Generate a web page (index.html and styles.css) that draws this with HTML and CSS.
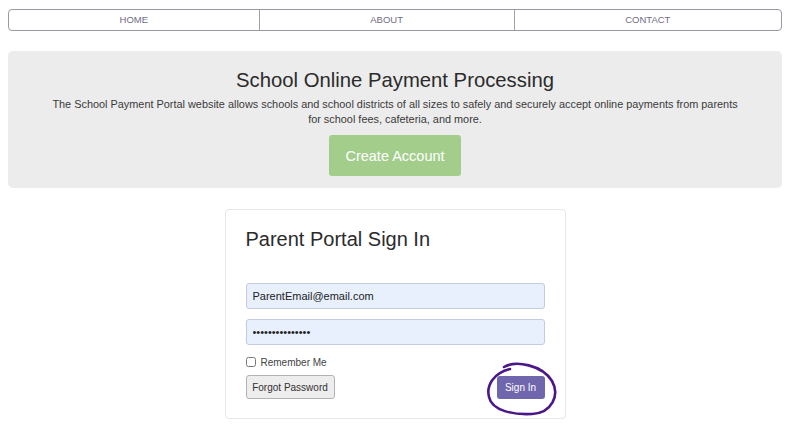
FILE: index.html
```html
<!DOCTYPE html>
<html lang="en">
<head>
    <meta charset="UTF-8">
    <meta name="viewport" content="width=device-width, initial-scale=1.0">
    <title>School Payment Portal</title>
    <link rel="stylesheet" href="styles.css">
</head>
<body>
    <nav class="top-nav">
        <a href="#" class="nav-item">HOME</a>
        <a href="#" class="nav-item">ABOUT</a>
        <a href="#" class="nav-item">CONTACT</a>
    </nav>

    <div class="jumbotron">
        <h1>School Online Payment Processing</h1>
        <p>The School Payment Portal website allows schools and school districts of all sizes to safely and securely accept online payments from parents for school fees, cafeteria, and more.</p>
        <button class="create-btn">Create Account</button>
    </div>

    <div class="signin-card">
        <h2>Parent Portal Sign In</h2>
        <form class="signin-form">
            <input type="email" class="field" value="ParentEmail@email.com">
            <input type="password" class="field" value="passwordpassw12">
            <label class="remember"><input type="checkbox"> Remember Me</label>
            <div class="form-actions">
                <button type="button" class="forgot-btn">Forgot Password</button>
                <div class="signin-wrap">
                    <button type="submit" class="signin-btn">Sign In</button>
                    <svg class="scribble" width="72" height="56" viewBox="0 0 72 56">
                        <path d="M18 6 C30 -1 56 4 66 20 C74 34 66 52 46 53 C28 54 6 50 3 36 C0 24 8 12 24 8"
                              fill="none" stroke="#4b1688" stroke-width="2.6" stroke-linecap="round"/>
                    </svg>
                </div>
            </div>
        </form>
    </div>
</body>
</html>
```

FILE: styles.css
```css
body {
    font-family: 'Liberation Sans', Arial, sans-serif;
    background-color: #fff;
    color: #333;
    margin: 0;
    padding: 9px 18px 0 8px;
}

.top-nav {
    display: flex;
    border: 1px solid #9a9aa4;
    border-radius: 4px;
    height: 20px;
}

.nav-item {
    flex: 1 1 auto;
    text-align: center;
    font-size: 9.5px;
    line-height: 20px;
    color: #6f6c86;
    text-decoration: none;
}

.nav-item + .nav-item {
    border-left: 1px solid #a0a0a8;
}

.jumbotron {
    margin-top: 20px;
    background-color: #ececec;
    border-radius: 5px;
    padding: 18px 40px 12px;
    text-align: center;
}

h1 {
    font-size: 20.3px;
    line-height: 23px;
    font-weight: normal;
    color: #2b2b2b;
    margin: 0 0 5px;
}

.jumbotron p {
    font-size: 10.9px;
    line-height: 15px;
    color: #3a3a3a;
    margin: 0 0 8px;
}

.create-btn {
    display: block;
    margin: 0 auto;
    background-color: #a3cd8b;
    color: #fff;
    font-family: inherit;
    font-size: 14.5px;
    border: none;
    border-radius: 3px;
    width: 132px;
    height: 41px;
    cursor: pointer;
}

.signin-card {
    width: 299px;
    margin: 21px auto 0;
    padding: 18px 20px 19px;
    border: 1px solid #e6e6e6;
    border-radius: 4px;
}

h2 {
    font-size: 20px;
    line-height: 23px;
    font-weight: normal;
    color: #2b2b2b;
    margin: 0 0 32px;
}

.signin-form {
    display: flex;
    flex-direction: column;
}

.field {
    height: 26px;
    box-sizing: border-box;
    margin-bottom: 10px;
    padding: 0 6px;
    font-family: inherit;
    font-size: 11px;
    color: #222;
    background-color: #e8f0fe;
    border: 1px solid #c3cbe0;
    border-radius: 3px;
}

.remember {
    display: flex;
    align-items: center;
    gap: 4px;
    height: 12px;
    margin-top: 1px;
    font-size: 10px;
    color: #444;
}

.remember input {
    margin: 0 1px 0 0;
    width: 10px;
    height: 10px;
}

.form-actions {
    display: flex;
    justify-content: space-between;
    align-items: center;
    margin-top: 7px;
}

.forgot-btn {
    background-color: #ededed;
    border: 1px solid #b2b2b2;
    border-radius: 3px;
    height: 24px;
    width: 89px;
    padding: 0;
    font-family: inherit;
    font-size: 10px;
    color: #333;
    cursor: pointer;
}

.signin-wrap {
    position: relative;
}

.signin-btn {
    display: block;
    background-color: #6f66ad;
    color: #fff;
    border: none;
    border-radius: 3px;
    height: 23px;
    width: 48px;
    font-family: inherit;
    font-size: 10px;
    cursor: pointer;
}

.scribble {
    position: absolute;
    left: -11px;
    top: -15px;
    pointer-events: none;
}
```
